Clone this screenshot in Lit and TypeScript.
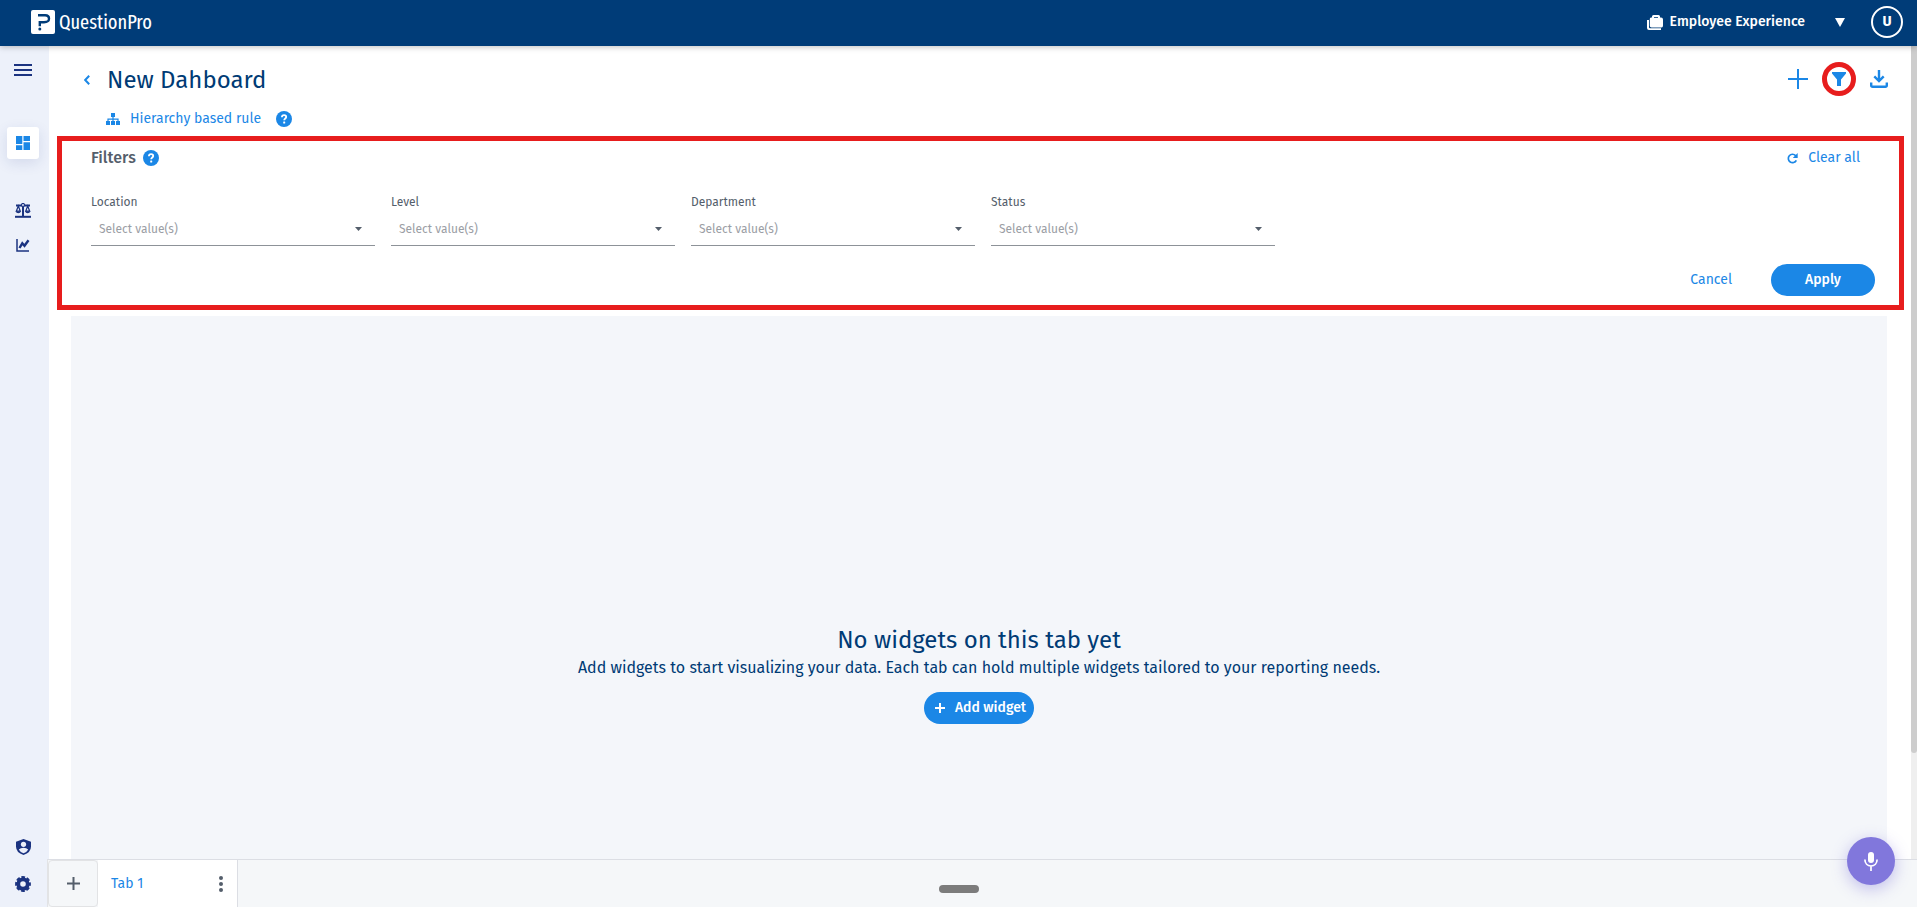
import { LitElement, html, css, svg } from "lit";
import { customElement, state } from "lit/decorators.js";

const help = html`<svg class="help" viewBox="0 0 16 16" aria-hidden="true">
  <circle cx="8" cy="8" r="8" fill="#1b87e6" />
  <path d="M5.9 6.2c0-1.3.9-2.1 2.2-2.1 1.3 0 2.1.8 2.1 1.9 0 1.5-2 1.6-2 3.3" fill="none" stroke="#fff" stroke-width="1.8" />
  <rect x="7.2" y="10.6" width="2" height="2" rx=".5" fill="#fff" />
</svg>`;

const plus = (size: number, width: number) => svg`<svg width=${size} height=${size} viewBox="0 0 ${size} ${size}" aria-hidden="true">
  <path d="M${size / 2} 0V${size}M0 ${size / 2}H${size}" stroke="currentColor" stroke-width=${width} />
</svg>`;

@customElement("app-root")
export class AppRoot extends LitElement {
  static styles = css`
    :host {
      display: flex;
      flex-direction: column;
      height: 100vh;
      font: 14px/20px "Fira Sans", "Noto Sans", sans-serif;
      color: #003b75;
      background: #fff;
      overflow: hidden;
    }
    *, *::before, *::after { box-sizing: border-box; }
    svg { display: block; flex: none; }
    button, select {
      font: inherit;
      color: inherit;
      background: none;
      border: 0;
      padding: 0;
      margin: 0;
      cursor: pointer;
    }
    a { color: inherit; text-decoration: none; }
    h1, h2, h3, p { margin: 0; font-weight: 400; }

    .topbar {
      display: flex;
      align-items: center;
      justify-content: space-between;
      height: 46px;
      padding: 0 14px 2px 31px;
      background: #003c78;
      color: #fff;
      box-shadow: 0 1px 6px rgba(0, 0, 0, 0.25);
      z-index: 2;
    }
    .brand { display: flex; align-items: center; gap: 4px; }
    .brand span { font: 400 21px/24px "Fira Sans Extra Condensed", "Fira Sans Condensed", "Fira Sans", sans-serif; font-size: 20px; }
    .account { display: flex; align-items: center; }
    .product { display: flex; align-items: center; gap: 7px; font-weight: 500; }
    .product .caret { margin-left: 23px; }
    .avatar {
      width: 32px;
      height: 32px;
      margin-left: 26px;
      border: 2px solid #fff;
      border-radius: 50%;
      font-weight: 700;
    }

    .body { display: flex; flex: 1; min-height: 0; }
    .side {
      display: flex;
      flex-direction: column;
      justify-content: space-between;
      align-items: center;
      width: 49px;
      padding: 18px 3px 15px 0;
      background: #edf1fa;
      color: #1b3380;
    }
    .side nav { display: flex; flex-direction: column; align-items: center; gap: 21px; }
    .side .menu { margin: 0 0 30px; padding: 0; }
    .side .tile {
      display: grid;
      place-items: center;
      width: 32px;
      height: 32px;
      margin-bottom: 23px;
      border-radius: 3px;
      background: #fff;
      color: #1b87e6;
      box-shadow: 0 4px 14px rgba(27, 51, 128, 0.12);
    }

    .work { display: flex; flex-direction: column; flex: 1; min-width: 0; position: relative; }
    .scroll { display: flex; flex: 1; min-height: 0; }
    .page { display: flex; flex-direction: column; flex: 1; min-width: 0; padding: 16px 7px 0 8px; }
    .track { width: 6px; background: #efefef; }
    .thumb { height: 87%; background: #cdcdcd; border-radius: 0 0 4px 4px; }

    .head { display: flex; justify-content: space-between; align-items: flex-start; padding: 0 16px 0 27px; }
    .title { display: flex; align-items: center; gap: 17px; padding-top: 1px; }
    .title a { color: #1b87e6; }
    .title h1 { font-size: 24px; line-height: 34px; }
    .tools { display: flex; align-items: center; gap: 14px; color: #1b87e6; }
    .tools .ring {
      display: grid;
      place-items: center;
      width: 34px;
      height: 34px;
      border: 5px solid #e71d1d;
      border-radius: 50%;
    }
    .rule { display: flex; align-items: center; padding: 12px 0 0 49px; color: #1b87e6; line-height: 20px; }
    .rule a { margin: 0 15px 0 10px; }
    .help { width: 16px; height: 16px; }

    .filters {
      margin-top: 7px;
      border: 5px solid #e71d1d;
      padding: 7px 24px 9px 29px;
    }
    .filters header { display: flex; justify-content: space-between; align-items: center; line-height: 20px; }
    .filters h2 { display: flex; align-items: center; gap: 7px; font-size: 16px; font-weight: 500; color: #545e6b; }
    .clear { display: flex; align-items: center; gap: 10px; padding-right: 15px; color: #1b87e6; }
    .fields { display: flex; flex-wrap: wrap; gap: 16px; margin-top: 25px; }
    .field { display: flex; flex-direction: column; flex: 0 1 284px; font-size: 12px; line-height: 18px; color: #545e6b; }
    .box { display: grid; align-items: center; border-bottom: 1px solid #8d9298; margin-top: 2px; }
    .box > * { grid-area: 1 / 1; }
    .box select { appearance: none; height: 32px; padding: 0 8px; font-size: 12px; color: #9b9ea5; width: 100%; }
    .box svg { justify-self: end; margin-right: 13px; pointer-events: none; }
    .actions { display: flex; justify-content: flex-end; align-items: center; gap: 39px; margin-top: 18px; }
    .actions .cancel { color: #1b87e6; }
    .primary {
      display: inline-flex;
      align-items: center;
      justify-content: center;
      height: 32px;
      border-radius: 16px;
      background: #1b87e6;
      color: #fff;
      font-weight: 500;
    }
    .actions .primary { min-width: 104px; }

    .canvas {
      display: flex;
      flex-direction: column;
      align-items: center;
      justify-content: flex-end;
      flex: 1;
      margin: 6px 17px 0 14px;
      padding-bottom: 135px;
      background: #f4f6fa;
      text-align: center;
    }
    .canvas h3 { font-size: 24px; line-height: 32px; }
    .canvas p { font-size: 16px; line-height: 24px; }
    .canvas .primary { margin-top: 12px; padding: 0 8px 0 11px; gap: 10px; }

    .tabs {
      display: flex;
      height: 48px;
      margin-left: -2px;
      border-top: 1px solid #dcdee4;
      border-left: 1px solid #e2e3e5;
      background: #f5f7f9;
      z-index: 1;
    }
    .tabs .new {
      display: grid;
      place-items: center;
      width: 50px;
      border: 1px solid #e2e3e5;
      border-radius: 4px;
      color: #545e6b;
    }
    .tab {
      display: flex;
      align-items: center;
      justify-content: space-between;
      width: 140px;
      padding: 0 14px 0 13px;
      border-right: 1px solid #dcdee4;
      background: #fff;
      color: #1b87e6;
    }
    .tab .more { color: #545e6b; }
    .grip {
      position: absolute;
      left: 50%;
      bottom: 14px;
      width: 40px;
      height: 8px;
      margin-left: -44px;
      border-radius: 4px;
      background: #7c7c7c;
      z-index: 2;
    }
    .voice {
      position: absolute;
      right: 22px;
      bottom: 22px;
      display: grid;
      place-items: center;
      width: 48px;
      height: 48px;
      border-radius: 50%;
      background: #8177dc;
      color: #fff;
      box-shadow: 0 4px 16px rgba(129, 119, 220, 0.45);
      z-index: 3;
    }
  `;

  @state() private fields = ["Location", "Level", "Department", "Status"];

  render() {
    return html`
      <header class="topbar">
        <a class="brand" href="#">
          <svg width="24" height="24" viewBox="0 0 24 24" aria-hidden="true">
            <rect width="24" height="24" rx="2" fill="#fff" />
            <path d="M7 5.3H14.2C17.8 5.3 18 7 18 8.6 18 11.8 16.3 12.2 13 12.2H8.8V16.3" fill="none" stroke="#003c78" stroke-width="2.4" />
            <circle cx="8.8" cy="19" r="1.5" fill="#003c78" />
          </svg>
          <span>QuestionPro</span>
        </a>
        <div class="account">
          <button class="product">
            <svg width="16" height="15" viewBox="0 0 16 15" fill="currentColor" aria-hidden="true">
              <path d="M4 2.500H5V1.500Q5 0 6.500 0H11.500Q13 0 13 1.500V2.500H14Q16 2.500 16 4.500V10.500Q16 12.500 14.500 12.500H4.500Q2.800 12.500 2.800 10.800V4Q2.800 2.500 4 2.500Z" />
              <path d="M7 2.500H11" fill="none" stroke="#003c78" stroke-width=".8" />
              <path d="M0 5H2V12.200Q2 13.200 3 13.200H14V15H2Q0 15 0 13Z" />
            </svg>
            Employee Experience
            <svg class="caret" width="10" height="9" viewBox="0 0 10 9" aria-hidden="true"><path d="M0 0H10L5 9Z" fill="#fff" /></svg>
          </button>
          <button class="avatar" aria-label="User menu">U</button>
        </div>
      </header>

      <div class="body">
        <aside class="side">
          <nav>
            <button class="menu" aria-label="Menu">
              <svg width="18" height="12" viewBox="0 0 18 12"><path d="M0 1H18M0 6H18M0 11H18" stroke="currentColor" stroke-width="2" /></svg>
            </button>
            <a class="tile" href="#" aria-label="Dashboards">
              <svg width="14" height="14" viewBox="0 0 14 14" fill="currentColor"><path d="M0 0H6.300V8H0ZM0 9.200H6.300V14H0ZM7.500 0H14V5H7.500ZM7.500 6.200H14V14H7.500Z" /></svg>
            </a>
            <a href="#" aria-label="Compare">
              <svg width="16" height="15" viewBox="0 0 16 15" fill="none" stroke="currentColor">
                <path d="M1 2.500H15M8 2V13" stroke-width="2" />
                <path d="M0 13.800H16" stroke-width="2" />
                <circle cx="8" cy="2" r="1.500" fill="#edf0fa" stroke-width="1.200" />
                <path d="M3.300 3 1.300 8.200H5.300ZM12.700 3 10.700 8.200H14.700Z" stroke-width="1.200" />
                <path d="M.6 8.300H6Q5.400 10.300 3.300 10.300T.6 8.300ZM10 8.300H15.400Q14.800 10.300 12.700 10.300T10 8.300Z" fill="currentColor" stroke="none" />
              </svg>
            </a>
            <a href="#" aria-label="Trends">
              <svg width="14" height="13" viewBox="0 0 14 13" fill="none" stroke="currentColor">
                <path d="M1 0V12H13" stroke-width="1.500" />
                <path d="M3.500 9 6.300 4.300 8.500 6.800 12.500 1.300" stroke-width="2.400" />
              </svg>
            </a>
          </nav>
          <nav>
            <a href="#" aria-label="Privacy">
              <svg width="15" height="16" viewBox="0 0 15 16">
                <path d="M7.500 0 15 2.700V7.500Q15 13.500 7.500 16 0 13.500 0 7.500V2.700Z" fill="currentColor" />
                <circle cx="7.500" cy="5.300" r="2.600" fill="#edf0fa" />
                <path d="M2.800 10.500Q4.500 8.800 7.500 8.800T12.200 10.500Q10.800 13.300 7.500 14.300 4.200 13.300 2.800 10.500Z" fill="#edf0fa" />
              </svg>
            </a>
            <a href="#" aria-label="Settings">
              <svg width="16" height="16" viewBox="0 0 16 16">
                <circle cx="8" cy="8" r="4.700" fill="none" stroke="currentColor" stroke-width="3.800" />
                <circle cx="8" cy="8" r="6.700" fill="none" stroke="currentColor" stroke-width="2.400" stroke-dasharray="3.600 1.662" stroke-dashoffset="1.800" />
              </svg>
            </a>
          </nav>
        </aside>

        <main class="work">
          <div class="scroll">
            <div class="page">
              <div class="head">
                <div class="title">
                  <a href="#" aria-label="Back">
                    <svg width="6" height="10" viewBox="0 0 6 10"><path d="M5.200 .8 1.200 5 5.200 9.200" fill="none" stroke="currentColor" stroke-width="2" /></svg>
                  </a>
                  <h1>New Dahboard</h1>
                </div>
                <div class="tools">
                  <button aria-label="Add">${plus(20, 2)}</button>
                  <button class="ring" aria-label="Filter">
                    <svg width="14" height="14" viewBox="0 0 14 14"><path d="M0 0H14V1.500L9 7.500V14H5V7.500L0 1.500Z" fill="currentColor" /></svg>
                  </button>
                  <button aria-label="Download">
                    <svg width="18" height="18" viewBox="0 0 18 18" fill="none" stroke="currentColor" stroke-width="2.400">
                      <path d="M9 0V11M4.300 6.400 9 11 13.700 6.400M1.200 12.500V15.300Q1.200 16.800 2.700 16.800H15.300Q16.800 16.800 16.800 15.300V12.500" />
                    </svg>
                  </button>
                </div>
              </div>
              <div class="rule">
                <svg width="14" height="12" viewBox="0 0 14 12" fill="currentColor" aria-hidden="true">
                  <path d="M5 0H9V4H7.600V5.500H12.600V8H14V12H10V8H11.400V6.700H7.600V8H9V12H5V8H6.400V6.700H2.600V8H4V12H0V8H1.400V5.500H6.400V4H5Z" />
                </svg>
                <a href="#">Hierarchy based rule</a>${help}
              </div>

              <section class="filters">
                <header>
                  <h2>Filters ${help}</h2>
                  <button class="clear">
                    <svg width="11" height="11" viewBox="0 0 11 11" aria-hidden="true">
                      <path d="M9.300 7.300A4.200 4.200 0 1 1 8.600 2.600L9.500 3.600" fill="none" stroke="currentColor" stroke-width="1.700" />
                      <path d="M10.700 0V4.900H5.800Z" fill="currentColor" />
                    </svg>
                    Clear all
                  </button>
                </header>
                <div class="fields">
                  ${this.fields.map(
                    (name) => html`<div class="field">
                      <label for=${name}>${name}</label>
                      <div class="box">
                        <select id=${name}><option>Select value(s)</option></select>
                        <svg width="7" height="4" viewBox="0 0 7 4" aria-hidden="true"><path d="M0 0H7L3.500 4Z" fill="#545e6b" /></svg>
                      </div>
                    </div>`
                  )}
                </div>
                <div class="actions">
                  <button class="cancel">Cancel</button>
                  <button class="primary">Apply</button>
                </div>
              </section>

              <section class="canvas">
                <h3>No widgets on this tab yet</h3>
                <p>Add widgets to start visualizing your data. Each tab can hold multiple widgets tailored to your reporting needs.</p>
                <button class="primary">${plus(10, 2)} Add widget</button>
              </section>
            </div>
            <div class="track"><div class="thumb"></div></div>
          </div>
          <footer class="tabs">
            <button class="new" aria-label="Add tab">${plus(13, 2)}</button>
            <div class="tab">
              <a href="#">Tab 1</a>
              <button class="more" aria-label="Tab options">
                <svg width="4" height="16" viewBox="0 0 4 16" fill="currentColor"><circle cx="2" cy="2" r="2" /><circle cx="2" cy="8" r="2" /><circle cx="2" cy="14" r="2" /></svg>
              </button>
            </div>
          </footer>
          <div class="grip"></div>
          <button class="voice" aria-label="Voice assistant">
            <svg width="14" height="19" viewBox="0 0 14 19" aria-hidden="true">
              <rect x="4" width="6" height="11" rx="3" fill="currentColor" />
              <path d="M.9 7.500C.9 11.500 3.500 14 7 14S13.100 11.500 13.100 7.500M7 14V19" fill="none" stroke="currentColor" stroke-width="1.700" />
            </svg>
          </button>
        </main>
      </div>
    `;
  }
}
